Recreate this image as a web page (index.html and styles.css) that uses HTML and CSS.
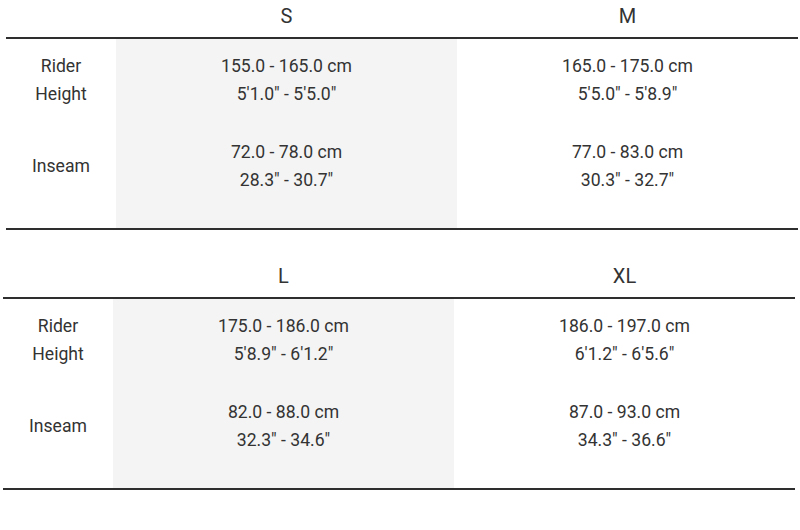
FILE: index.html
```html
<!DOCTYPE html>
<html>
<head>
<meta charset="utf-8">
<link rel="stylesheet" href="styles.css">
</head>
<body>
<div class="table t1">
  <div class="head">
    <div class="hcell"></div>
    <div class="hcell">S</div>
    <div class="hcell">M</div>
  </div>
  <div class="body">
    <div class="col labels">
      <div class="cell">Rider<br>Height</div>
      <div class="cell">Inseam</div>
    </div>
    <div class="col shade">
      <div class="cell">155.0 - 165.0 cm<br>5'1.0" - 5'5.0"</div>
      <div class="cell">72.0 - 78.0 cm<br>28.3" - 30.7"</div>
    </div>
    <div class="col">
      <div class="cell">165.0 - 175.0 cm<br>5'5.0" - 5'8.9"</div>
      <div class="cell">77.0 - 83.0 cm<br>30.3" - 32.7"</div>
    </div>
  </div>
</div>
<div class="table t2">
  <div class="head">
    <div class="hcell"></div>
    <div class="hcell">L</div>
    <div class="hcell">XL</div>
  </div>
  <div class="body">
    <div class="col labels">
      <div class="cell">Rider<br>Height</div>
      <div class="cell">Inseam</div>
    </div>
    <div class="col shade">
      <div class="cell">175.0 - 186.0 cm<br>5'8.9" - 6'1.2"</div>
      <div class="cell">82.0 - 88.0 cm<br>32.3" - 34.6"</div>
    </div>
    <div class="col">
      <div class="cell">186.0 - 197.0 cm<br>6'1.2" - 6'5.6"</div>
      <div class="cell">87.0 - 93.0 cm<br>34.3" - 36.6"</div>
    </div>
  </div>
</div>
</body>
</html>
```
FILE: styles.css
```css
html, body {
  margin: 0;
  padding: 0;
  background: #fff;
}
body {
  font-family: Roboto, "Liberation Sans", sans-serif;
  color: #333;
  font-size: 17.6px;
  width: 800px;
  height: 530px;
  overflow: hidden;
}
.table {
  width: 792px;
}
.t1 {
  margin-left: 6px;
}
.t2 {
  margin-left: 3px;
  margin-top: 30px;
}
.head {
  display: grid;
  grid-template-columns: 110px 341px 341px;
  height: 37px;
  border-bottom: 2px solid #2e2e2e;
}
.hcell {
  text-align: center;
  font-size: 20px;
  line-height: 28px;
  padding-top: 2px;
}
.body {
  display: grid;
  grid-template-columns: 110px 341px 341px;
  height: 189px;
  border-bottom: 2px solid #2e2e2e;
}
.col {
  display: flex;
  flex-direction: column;
}
.shade {
  background: #f4f4f4;
}
.cell {
  text-align: center;
  line-height: 28px;
  padding: 13px 0 17px;
}
.labels .cell {
  display: flex;
  align-items: center;
  justify-content: center;
  height: 56px;
  box-sizing: content-box;
}
```
